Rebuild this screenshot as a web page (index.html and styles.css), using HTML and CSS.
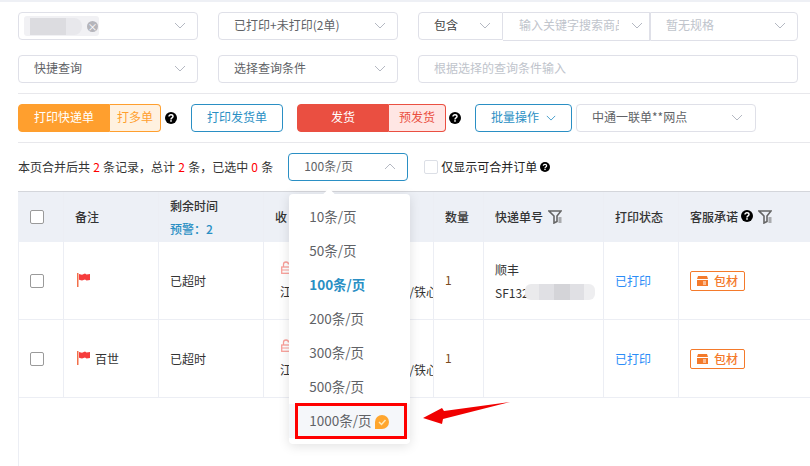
FILE: index.html
```html
<!DOCTYPE html>
<html lang="zh">
<head>
    <meta charset="UTF-8">
    <title>订单打印</title>
    <link rel="stylesheet" href="styles.css">
</head>
<body>
    <svg class="sprites" width="0" height="0">
        <symbol id="chev" viewBox="0 0 12 7"><path d="M1 1l5 5 5-5" fill="none" stroke="currentColor" stroke-width="1"/></symbol>
        <symbol id="help" viewBox="0 0 12 12"><circle cx="6" cy="6" r="6" fill="#000"/><path d="M4 4.6C4 3.4 4.9 2.8 6 2.8s2 .6 2 1.7c0 1.5-2 1.4-2 2.9" fill="none" stroke="#fff" stroke-width="1.5"/><rect x="5.2" y="8.2" width="1.6" height="1.5" fill="#fff"/></symbol>
        <symbol id="filter" viewBox="0 0 14 14"><path d="M1 1h12L9 6v5.5L6 13V6z" fill="none" stroke="#666" stroke-width="1.6"/><path d="M10.5 8h3M10.5 10h3M10.5 12h3" stroke="#666"/></symbol>
        <symbol id="flag" viewBox="0 0 13 14"><rect x="0" y="0" width="1.5" height="14" fill="#f2704a"/><path d="M2 1l3 .8L8 .4l1.5 1.2L13 1v6l-3.500 .6L8 6.500 5 7.500 2 6.800z" fill="#f63c3c"/></symbol>
        <symbol id="lock" viewBox="0 0 10 13"><path d="M2.500 6V3.500a2.500 2.500 0 0 1 5 0" fill="none" stroke="#f9a09a" stroke-width="1.300"/><rect x=".7" y="6" width="8.600" height="6.300" fill="none" stroke="#f9a09a" stroke-width="1.300"/><path d="M1 9h8" stroke="#f9a09a"/></symbol>
        <symbol id="box" viewBox="0 0 11 10"><path d="M1 0h9l1 3H0z" fill="#f47a2b"/><path d="M0 4h11v6H0z" fill="#f47a2b"/><path d="M6 6h3M6 8h3" stroke="#fff"/></symbol>
    </svg>

    <div class="filters">
        <div class="filter-row">
            <div class="select w-180">
                <div class="shop-tag"><div class="blur-name"></div><div class="tag-close">×</div></div>
                <svg class="chev"><use href="#chev"/></svg>
            </div>
            <div class="select w-180"><span>已打印+未打印(2单)</span><svg class="chev"><use href="#chev"/></svg></div>
            <div class="joined">
                <div class="select part-a dark"><span>包含</span><svg class="chev"><use href="#chev"/></svg></div>
                <div class="select part-b muted"><span class="clip">输入关键字搜索商品</span><svg class="chev"><use href="#chev"/></svg></div>
                <div class="select part-c muted"><span>暂无规格</span><svg class="chev"><use href="#chev"/></svg></div>
            </div>
        </div>
        <div class="filter-row">
            <div class="select w-180"><span>快捷查询</span><svg class="chev"><use href="#chev"/></svg></div>
            <div class="select w-180"><span>选择查询条件</span><svg class="chev"><use href="#chev"/></svg></div>
            <div class="select wide muted"><span>根据选择的查询条件输入</span></div>
        </div>
    </div>

    <div class="actions">
        <div class="btn-pair orange">
            <span class="main">打印快递单</span><span class="side">打多单</span>
        </div>
        <svg class="help after-pair"><use href="#help"/></svg>
        <span class="btn outline w-92">打印发货单</span>
        <div class="btn-pair red">
            <span class="main">发货</span><span class="side">预发货</span>
        </div>
        <svg class="help after-red"><use href="#help"/></svg>
        <span class="btn outline batch">批量操作<svg class="chev-s"><use href="#chev"/></svg></span>
        <div class="select express"><span>中通一联单**网点</span><svg class="chev"><use href="#chev"/></svg></div>
    </div>

    <div class="summary">
        <span class="lift">本页合并后共 <em>2</em> 条记录，总计 <em>2</em> 条，已选中 <em>0</em> 条</span>
        <div class="page-size">
            <div class="select open"><span>100条/页</span><svg class="chev flip"><use href="#chev"/></svg></div>
            <div class="dropdown">
                <div class="item">10条/页</div>
                <div class="item">50条/页</div>
                <div class="item active">100条/页</div>
                <div class="item">200条/页</div>
                <div class="item">300条/页</div>
                <div class="item">500条/页</div>
                <div class="item hover">1000条/页
                    <svg class="vip" viewBox="0 0 14 14"><path d="M7 0a7 7 0 1 1 0 14H0V7a7 7 0 0 1 7-7z" fill="#ffa62e"/><path d="M4 7l2.500 2.500L10.500 5" fill="none" stroke="#ffe9b8" stroke-width="1.500"/></svg>
                </div>
                <div class="red-box"></div>
            </div>
        </div>
        <label class="only-merge"><span class="check"></span><span class="lift">仅显示可合并订单</span><svg class="help small"><use href="#help"/></svg></label>
    </div>

    <svg class="arrow" width="92" height="26" viewBox="0 0 92 26"><path d="M87 2L21 11l-2-3L0 18l19 6 1-5z" fill="#f00000"/></svg>

    <table class="orders">
        <colgroup>
            <col class="c-check"><col class="c-remark"><col class="c-time"><col class="c-addr"><col class="c-num"><col class="c-express"><col class="c-status"><col class="c-promise">
        </colgroup>
        <thead>
            <tr>
                <th><span class="check"></span></th>
                <th>备注</th>
                <th><div>剩余时间</div><div class="warn">预警：2</div></th>
                <th>收</th>
                <th>数量</th>
                <th>快递单号<svg class="filter-ic"><use href="#filter"/></svg></th>
                <th>打印状态</th>
                <th>客服承诺<svg class="help th-help"><use href="#help"/></svg><svg class="filter-ic"><use href="#filter"/></svg></th>
            </tr>
        </thead>
        <tbody>
            <tr>
                <td><span class="check"></span></td>
                <td><svg class="flag"><use href="#flag"/></svg></td>
                <td>已超时</td>
                <td class="addr"><svg class="lock"><use href="#lock"/></svg><div class="addr-line"><span>江</span><span>/铁心</span></div></td>
                <td class="qty">1</td>
                <td><div class="exp-name">顺丰</div><div class="exp-no">SF132<span class="blur-no"></span></div></td>
                <td class="printed">已打印</td>
                <td><span class="tag"><svg class="box"><use href="#box"/></svg>包材</span></td>
            </tr>
            <tr>
                <td><span class="check"></span></td>
                <td><svg class="flag"><use href="#flag"/></svg><span class="flag-text">百世</span></td>
                <td>已超时</td>
                <td class="addr"><svg class="lock"><use href="#lock"/></svg><div class="addr-line"><span>江</span><span>/铁心</span></div></td>
                <td class="qty">1</td>
                <td></td>
                <td class="printed">已打印</td>
                <td><span class="tag"><svg class="box"><use href="#box"/></svg>包材</span></td>
            </tr>
        </tbody>
    </table>
    <div class="table-rest"></div>
</body>
</html>
```

FILE: styles.css
```css
* {
    box-sizing: border-box;
}
html, body {
    margin: 0;
    height: 466px;
    overflow: hidden;
}
body {
    position: relative;
    background: #fff;
    border-top: 2px solid #eef0f5;
    font-family: "Noto Sans CJK SC", "Noto Sans", sans-serif;
    font-size: 12px;
    color: #333;
}
.sprites {
    position: absolute;
}

/* filters */
.filters {
    margin-left: 18px;
    padding: 10px 12px 10px 0;
    display: flex;
    flex-direction: column;
    gap: 14px;
}
.filter-row {
    display: flex;
    gap: 20px;
}
.select {
    height: 28px;
    border: 1px solid #dfe0e8;
    border-radius: 4px;
    background: #fff;
    padding: 0 6px 2px 15px;
    display: flex;
    align-items: center;
    justify-content: space-between;
    color: #606266;
    white-space: nowrap;
}
.select span {
    margin-bottom: 2px;
}
.w-180 {
    width: 180px;
}
.wide {
    flex: 1;
}
.dark {
    color: #444;
}
.muted {
    color: #c0c4cc;
}
.chev {
    width: 12px;
    height: 7px;
    margin-right: 5px;
    color: #b4b8c2;
    flex: none;
}
.flip {
    transform: rotate(180deg);
}
.clip {
    width: 100px;
    overflow: hidden;
}
.joined {
    display: flex;
    flex: 1;
}
.part-a {
    width: 85px;
    border-radius: 4px 0 0 4px;
}
.part-b {
    width: 147px;
    height: 29px;
    border-left: 0;
    border-radius: 0;
    padding-left: 16px;
    padding-right: 1px;
}
.part-c {
    flex: 1;
    height: 29px;
    border-left: 1px solid #dfe0e8;
    border-radius: 0 4px 4px 0;
}
.shop-tag {
    margin: 2px 0 0 -10px;
    width: 75px;
    height: 20px;
    background: #f1f1f4;
    border-radius: 3px;
    display: flex;
    align-items: center;
    justify-content: space-between;
    padding: 0 1px 0 6px;
}
.blur-name {
    width: 52px;
    height: 17px;
    background: linear-gradient(to right, #dcdce0 0 70%, #e8e8ec 70% 100%);
    border-radius: 0 8px 8px 0;
}
.tag-close {
    width: 11px;
    height: 11px;
    border-radius: 50%;
    background: #b5b5bb;
    color: #fff;
    font-size: 10px;
    line-height: 11px;
    text-align: center;
}

/* action buttons */
.actions {
    margin-left: 18px;
    height: 50px;
    border-top: 1px solid #e8e8ec;
    border-bottom: 1px solid #e8e8ec;
    display: flex;
    align-items: center;
}
.btn-pair {
    display: flex;
    height: 28px;
    line-height: 24px;
    text-align: center;
}
.btn-pair .main {
    width: 92px;
    color: #fff;
    border-radius: 4px 0 0 4px;
}
.btn-pair .side {
    border: 1px solid;
    border-left: 0;
    border-radius: 0 4px 4px 0;
}
.orange .main {
    background: #ff9f2e;
    border: 1px solid #ff9f2e;
}
.orange .side {
    width: 51px;
    color: #ff9f2e;
    background: #fff1e0;
    border-color: #ff9f2e;
}
.red .main {
    background: #ea4f41;
    border: 1px solid #ea4f41;
}
.red .side {
    width: 57px;
    color: #ea4f41;
    background: #ffe6e4;
    border-color: #ea4f41;
}
.help {
    width: 12px;
    height: 12px;
    flex: none;
}
.after-pair {
    margin-left: 4px;
}
.after-red {
    margin-left: 3px;
}
.btn {
    height: 28px;
    line-height: 24px;
    text-align: center;
    border-radius: 4px;
}
.outline {
    border: 1px solid #2a8fc4;
    color: #2a8fc4;
}
.w-92 {
    width: 92px;
    margin: 0 14px 0 14px;
}
.batch {
    width: 97px;
    margin-left: 14px;
}
.chev-s {
    width: 10px;
    height: 6px;
    margin-left: 7px;
    vertical-align: 1px;
    color: #2a8fc4;
}
.express {
    width: 180px;
    margin-left: 4px;
    padding-right: 7px;
}

/* summary */
.summary {
    margin-left: 18px;
    height: 48px;
    display: flex;
    align-items: center;
    color: #333;
}
.lift {
    margin-bottom: 2px;
}
.summary em {
    font-style: normal;
    color: #f00;
    margin: 0 .5px;
}
.page-size {
    position: relative;
    width: 120px;
    margin-left: 15px;
}
.page-size .open {
    border-color: #2a8fc4;
}
.dropdown {
    position: absolute;
    top: 41px;
    left: 1px;
    width: 121px;
    height: 250px;
    padding: 6px 0;
    background: #fff;
    border-radius: 4px;
    box-shadow: 0 2px 12px rgba(0, 0, 0, 0.12);
    z-index: 5;
}
.dropdown::before {
    content: "";
    position: absolute;
    top: -4px;
    left: 36px;
    width: 8px;
    height: 8px;
    background: #fff;
    transform: rotate(45deg);
}
.item {
    height: 34px;
    line-height: 32px;
    padding-left: 20px;
    font-size: 13.5px;
    color: #606266;
    position: relative;
}
.item.active {
    color: #2a8fc4;
    font-weight: 700;
}
.item.hover {
    background: #f5f7fa;
}
.vip {
    width: 14px;
    height: 14px;
    vertical-align: -3px;
}
.red-box {
    position: absolute;
    left: 6px;
    top: 209px;
    width: 112px;
    height: 36px;
    border: 3px solid #f00;
}
.only-merge {
    display: flex;
    align-items: center;
    margin-left: 16px;
    color: #222;
}
.only-merge .check {
    margin-right: 3px;
    border-color: #dcdfe6;
}
.help.small {
    width: 10px;
    height: 10px;
    margin-left: 3px;
}
.check {
    display: inline-block;
    width: 14px;
    height: 14px;
    border: 1px solid #9a9a9a;
    border-radius: 2px;
    background: #fff;
}
.arrow {
    position: absolute;
    left: 423px;
    top: 398px;
    z-index: 6;
}

/* table */
.orders {
    margin-left: 18px;
    width: 792px;
    table-layout: fixed;
    border-collapse: separate;
    border-spacing: 0;
    border-top: 1px solid #d4d6db;
}
.c-check { width: 46px; }
.c-remark { width: 95px; }
.c-time { width: 105px; }
.c-addr { width: 170px; }
.c-num { width: 50px; }
.c-express { width: 120px; }
.c-status { width: 75px; }
.c-promise { width: 131px; }
.orders th, .orders td {
    border-right: 1px solid #eceef4;
    padding: 0 0 0 11px;
    white-space: nowrap;
    vertical-align: middle;
    text-align: left;
    overflow: hidden;
}
.orders th:last-child, .orders td:last-child {
    border-right: 0;
}
.orders th {
    height: 50px;
    background: #edf0f6;
    font-weight: 500;
    color: #333;
    line-height: 20px;
}
.orders th:first-child {
    padding-left: 12px;
}
.orders td {
    height: 78px;
    border-bottom: 1px solid #eceef4;
    color: #333;
}
.orders td:first-child {
    border-left: 1px solid #eceef4;
}
.orders th .check, .orders td .check {
    display: block;
}
.table-rest {
    margin-left: 18px;
    height: 80px;
    border-left: 1px solid #eceef4;
}
.warn {
    color: #2a8fc4;
    margin-top: 3px;
}
.filter-ic {
    width: 14px;
    height: 14px;
    margin-left: 5px;
    vertical-align: -2px;
}
.th-help {
    margin-left: 3px;
    vertical-align: 0;
}
.flag {
    width: 13px;
    height: 14px;
    margin-left: 2px;
    vertical-align: -1px;
}
.flag-text {
    margin-left: 5px;
}
.addr {
    padding-left: 16px !important;
    padding-right: 0 !important;
}
.lock {
    display: block;
    width: 10px;
    height: 13px;
    margin: 0 0 9px 1px;
}
.addr-line {
    display: flex;
    justify-content: space-between;
    margin-right: -5px;
}
.qty {
    color: #7a4a20 !important;
    padding-bottom: 2px !important;
}
.exp-name {
    margin-bottom: 6px;
}
.exp-no {
    display: flex;
    align-items: center;
}
.blur-no {
    width: 70px;
    height: 16px;
    margin-left: -4px;
    background: linear-gradient(to right, #eaeaec 0 20%, #e0e0e4 20% 42%, #d4d4d8 42% 64%, #e0e0e4 64% 85%, #eeeef0 85% 100%);
    border-radius: 6px;
}
.printed {
    color: #2b8cf7 !important;
}
.tag {
    display: inline-flex;
    align-items: center;
    width: 55px;
    height: 20px;
    border: 1px solid #f47a2b;
    border-radius: 2px;
    color: #f47a2b;
    font-weight: 500;
    padding-left: 6px;
}
.box {
    width: 11px;
    height: 10px;
    margin-right: 6px;
}
```
